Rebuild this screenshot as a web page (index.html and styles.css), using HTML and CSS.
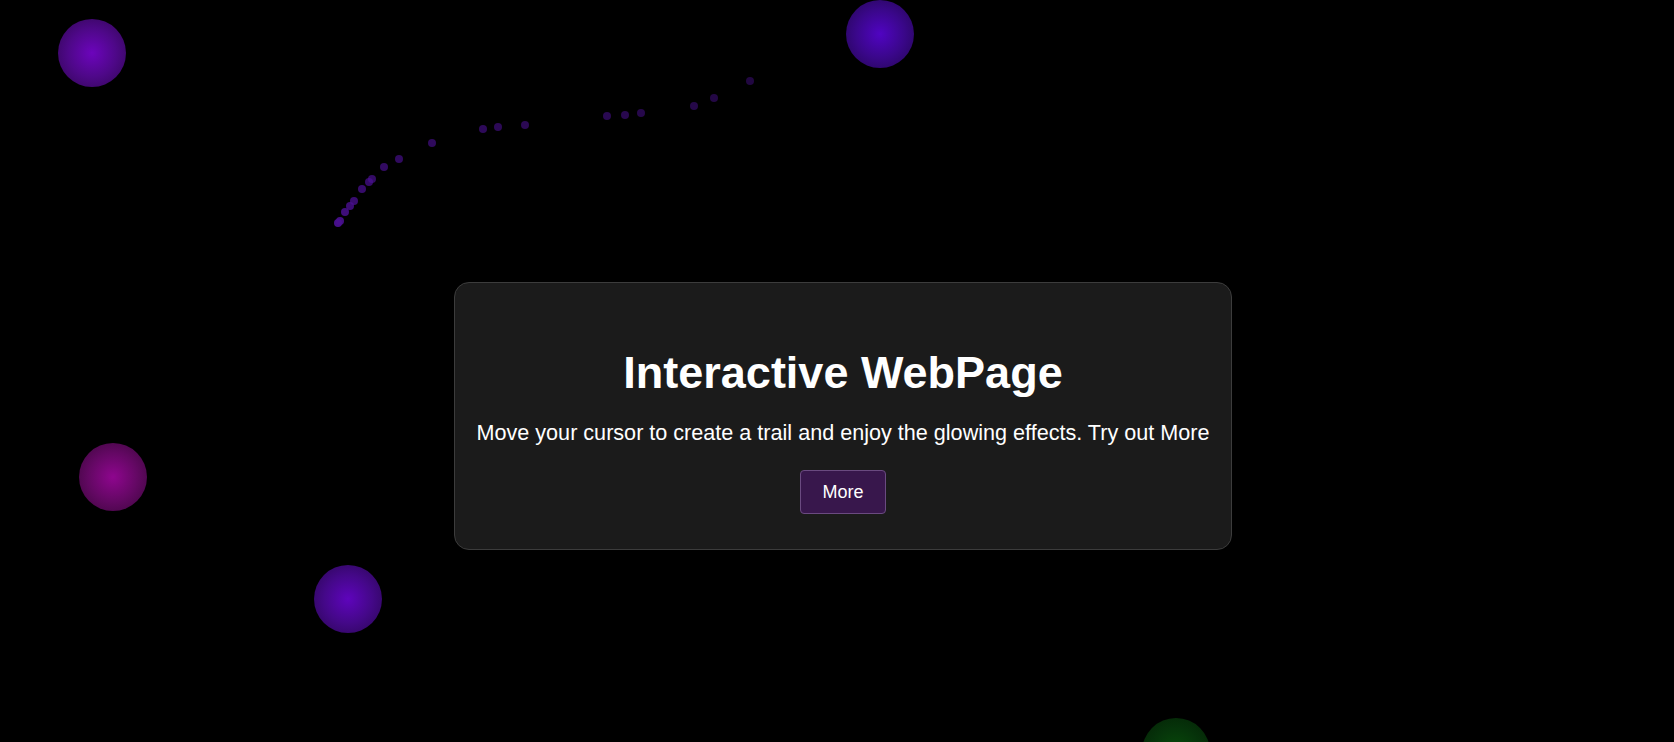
FILE: index.html
```html
<!DOCTYPE html>
<html lang="en">
<head>
<meta charset="utf-8">
<title>Interactive WebPage</title>
<link rel="stylesheet" href="styles.css">
</head>
<body>
<div class="orb orb-violet" style="left:58px;top:19px"></div>
<div class="orb orb-indigo" style="left:846px;top:0px"></div>
<div class="orb orb-magenta" style="left:79px;top:443px"></div>
<div class="orb orb-violet2" style="left:314px;top:565px"></div>
<div class="orb orb-green" style="left:1142px;top:718px"></div>

<div class="dot" style="left:746px;top:77px;opacity:.45"></div>
<div class="dot" style="left:710px;top:94px;opacity:.48"></div>
<div class="dot" style="left:690px;top:102px;opacity:.5"></div>
<div class="dot" style="left:637px;top:109px;opacity:.52"></div>
<div class="dot" style="left:621px;top:111px;opacity:.54"></div>
<div class="dot" style="left:603px;top:112px;opacity:.56"></div>
<div class="dot" style="left:521px;top:121px;opacity:.58"></div>
<div class="dot" style="left:494px;top:123px;opacity:.6"></div>
<div class="dot" style="left:479px;top:125px;opacity:.62"></div>
<div class="dot" style="left:428px;top:139px;opacity:.64"></div>
<div class="dot" style="left:395px;top:155px;opacity:.66"></div>
<div class="dot" style="left:380px;top:163px;opacity:.68"></div>
<div class="dot" style="left:368px;top:175px;opacity:.7"></div>
<div class="dot" style="left:365px;top:178px;opacity:.72"></div>
<div class="dot" style="left:358px;top:185px;opacity:.74"></div>
<div class="dot" style="left:350px;top:197px;opacity:.78"></div>
<div class="dot" style="left:346px;top:202px;opacity:.8"></div>
<div class="dot" style="left:341px;top:208px;opacity:.84"></div>
<div class="dot" style="left:336px;top:217px;opacity:.9"></div>
<div class="dot" style="left:334px;top:219px;opacity:.95"></div>

<main class="stage">
  <section class="card">
    <h1 class="title">Interactive WebPage</h1>
    <p class="lead">Move your cursor to create a trail and enjoy the glowing effects. Try out More</p>
    <button class="more-btn" type="button">More</button>
  </section>
</main>
</body>
</html>
```

FILE: styles.css
```css
html, body {
  margin: 0;
  padding: 0;
  height: 100%;
  overflow: hidden;
}

body {
  background: #000;
  font-family: "Liberation Sans", Arial, sans-serif;
  color: #fff;
  position: relative;
}

.stage {
  display: flex;
  justify-content: center;
  align-items: flex-start;
  padding: 282px 0 0 12px;
}

.card {
  background: #1b1b1b;
  border: 1px solid #3c3c3c;
  border-radius: 15px;
  padding: 34px 22px 35px;
  text-align: center;
  position: relative;
  z-index: 2;
}

.title {
  margin: 30px 0 21px;
  font-size: 45px;
  line-height: 52px;
  font-weight: 700;
  color: #fff;
}

.lead {
  margin: 0 0 25px;
  font-size: 21.6px;
  line-height: 25px;
  color: #fff;
  white-space: nowrap;
}

.more-btn {
  display: block;
  margin: 0 auto;
  font-family: "Liberation Sans", Arial, sans-serif;
  font-size: 18px;
  line-height: 22px;
  color: #fff;
  background: #38174c;
  border: 1px solid #6a4a80;
  border-radius: 4px;
  padding: 10px 21.5px;
}

.orb {
  position: absolute;
  width: 68px;
  height: 68px;
  border-radius: 50%;
  z-index: 1;
}

.orb-violet {
  background: radial-gradient(circle, #6c04bc 0%, #4e0888 50%, #2e064f 100%);
}

.orb-indigo {
  background: radial-gradient(circle, #5004c2 0%, #3a078a 50%, #22064e 100%);
}

.orb-magenta {
  background: radial-gradient(circle, #8e068e 0%, #640864 50%, #380638 100%);
}

.orb-violet2 {
  background: radial-gradient(circle, #5e04bc 0%, #440888 50%, #28064f 100%);
}

.orb-green {
  background: radial-gradient(circle, #084a0a 0%, #06340a 50%, #041f05 100%);
}

.dot {
  position: absolute;
  width: 8px;
  height: 8px;
  border-radius: 50%;
  background: #4a1090;
  filter: blur(0.6px);
  z-index: 1;
}
```
